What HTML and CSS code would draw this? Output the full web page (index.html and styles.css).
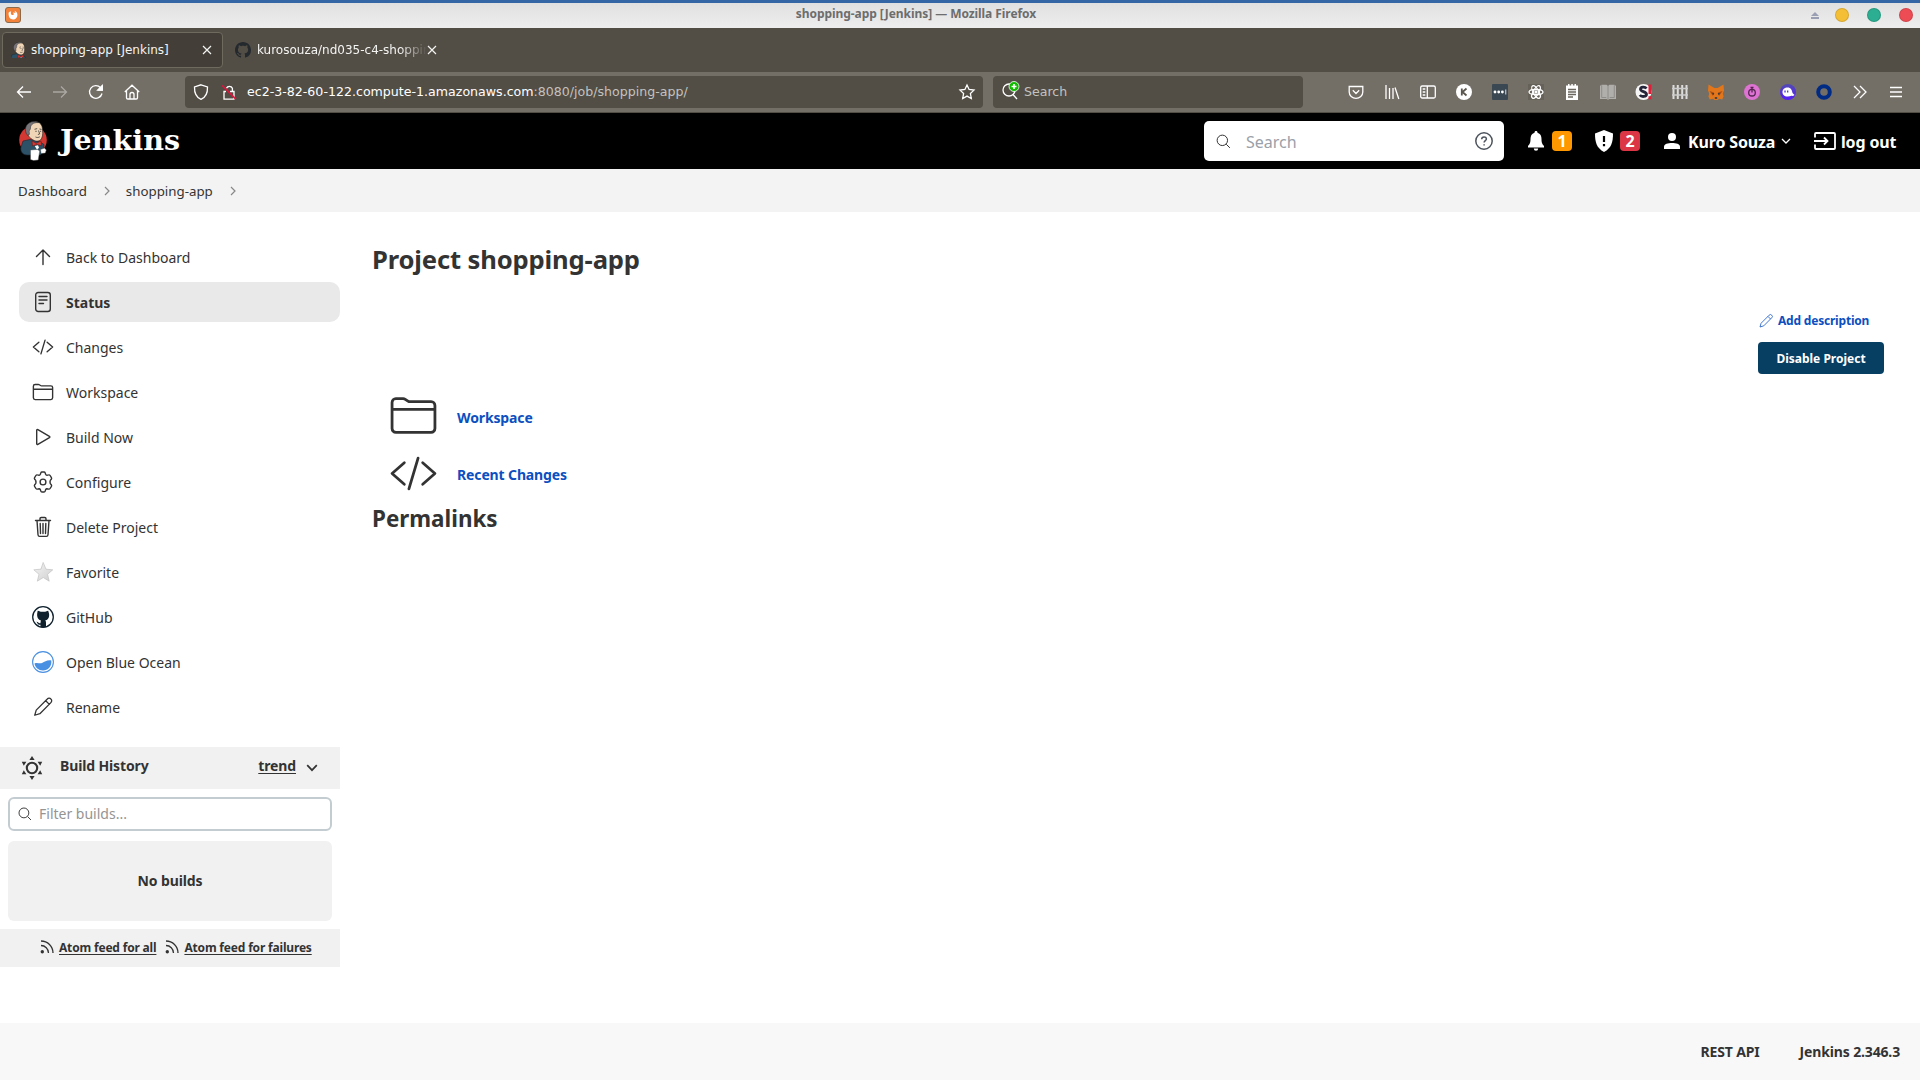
FILE: index.html
```html
<!DOCTYPE html>
<html lang="en">
<head>
<meta charset="utf-8">
<title>shopping-app [Jenkins]</title>
<link rel="stylesheet" href="styles.css">
</head>
<body>
<svg width="0" height="0" class="defs">
  <defs>
    <symbol id="folder" viewBox="0 0 512 512"><path d="M440 432H72a40 40 0 01-40-40V120a40 40 0 0140-40h75.89a40 40 0 0122.19 6.72l27.84 18.56a40 40 0 0022.19 6.72H440a40 40 0 0140 40v240a40 40 0 01-40 40zM32 192h448"/></symbol>
    <symbol id="code" viewBox="0 0 512 512"><path d="M160 368L32 256l128-112M352 368l128-112-128-112M304 96l-96 320"/></symbol>
    <symbol id="pencil" viewBox="0 0 24 24"><path d="M3 21l1.6-5.6L16.700 3.300a2.600 2.600 0 0 1 3.900 0a2.600 2.600 0 0 1 0 3.900L8.600 19.300zM15 5.200l3.900 3.900"/></symbol>
    <symbol id="search" viewBox="0 0 512 512"><path d="M221 64a157 157 0 10157 157A157 157 0 00221 64zM338 338l110 110"/></symbol>
    <symbol id="feed" viewBox="0 0 14 14"><circle cx="2.300" cy="11.700" r="1.700" fill="#333" stroke="none"/><path d="M1 5.500a7.500 7.500 0 0 1 7.500 7.500M1 1a12 12 0 0 1 12 12"/></symbol>
    <symbol id="octocat" viewBox="0 0 16 16"><path d="M8 0C3.580 0 0 3.580 0 8c0 3.540 2.290 6.530 5.470 7.590.4.070.55-.17.55-.38 0-.19-.01-.82-.01-1.490-2.010.37-2.530-.49-2.690-.94-.09-.23-.48-.94-.82-1.130-.28-.15-.68-.52-.01-.53.63-.01 1.080.58 1.230.82.72 1.210 1.870.87 2.330.66.07-.52.28-.87.51-1.070-1.780-.2-3.640-.89-3.640-3.950 0-.87.31-1.590.82-2.150-.08-.2-.36-1.020.08-2.120 0 0 .67-.21 2.200.82.64-.18 1.320-.27 2-.27s1.360.09 2 .27c1.530-1.040 2.200-.82 2.200-.82.44 1.100.16 1.920.08 2.120.51.56.82 1.270.82 2.150 0 3.070-1.870 3.750-3.650 3.950.29.25.54.73.54 1.480 0 1.070-.01 1.930-.01 2.200 0 .21.15.46.55.38A8.010 8.010 0 0 0 16 8c0-4.420-3.580-8-8-8z"/></symbol>
    <linearGradient id="silver" x1="0" y1="0" x2="1" y2="1"><stop offset="0" stop-color="#f4f4f4"/><stop offset="1" stop-color="#cfcfcf"/></linearGradient>
    <linearGradient id="ghost" x1="0" y1="0" x2="0" y2="1"><stop offset="0" stop-color="#534bb1"/><stop offset="1" stop-color="#551bf9"/></linearGradient>
    <symbol id="butler" viewBox="0 0 28 40">
      <path d="M4 20l7-1.500 10 2.500 4 2.500-.5 6-3 4.500H8C4 34 1.500 31 1.800 27z" fill="#2d5166" stroke="#172530" stroke-width=".6"/>
      <path d="M8.500 9C9 3.500 12.500.8 16.500.8c4.500 0 7 3.200 7 8.200.6 4.500 0 8-2.300 10.300-3 1.700-6 .5-8.700-1.500C9 15.500 8 13 8.500 9z" fill="#f0d6b7" stroke="#222" stroke-width=".6"/>
      <path d="M7.500 13C4.500 7 8 .8 15 .6c2-.1 4 .3 5 1-4-.3-7 .8-8.200 3.400-.6 1.500 0 2.800-.8 3.800-.6.900-1 1.200-.7 2.600.2 1.200.2 2.200-.4 2.600-1 .4-1.800.1-2.400-1z" fill="#77757a" stroke="#222" stroke-width=".5"/>
      <path d="M15.500 8.300l2.700-.7M20.500 8l2 .4M16.300 10.300h1.400M21 10.300h1.200M19.500 9.500l1.200 3.400-1.800.6M16.500 16c1.600.7 2.800.6 4.300-.2" fill="none" stroke="#333" stroke-width=".8"/>
      <path d="M13 20l4.200 2.300L22 20l.5 4.800-4.700-1.300-4.300 1.500z" fill="#d33833" stroke="#5b1715" stroke-width=".5"/>
      <path d="M15.800 25l3.200-.8 1 2.600-2 2z" fill="#fff"/>
      <path d="M11.500 29l7-.6 2.200 1.600-1.500 9-4.700.6-3-1z" fill="#fff" stroke="#444" stroke-width=".4"/>
      <path d="M21.500 28.500l4-1.400 1.800 2-1 3-4.200.4z" fill="#fff" stroke="#444" stroke-width=".4"/>
    </symbol>
  </defs>
</svg>

<div class="titlebar">
  <span class="app-icon"><svg viewBox="0 0 16 16"><path d="M3 5.500C2.500 10.500 5 13 8 13s5.400-2.300 5-6c-.3-2-1.500-3.500-3.500-4 1 1 1.400 2 1.200 3-.9-.9-2-.9-2.700-.4.900.4 1.200 1.300.6 2-.8.900-2.600.5-3-.9C5.300 5.700 5.500 4.700 6 4 4.700 4 3.500 4.500 3 5.500z" fill="#fff"/></svg></span>
  <span class="window-title">shopping-app [Jenkins] — Mozilla Firefox</span>
  <span class="window-buttons">
    <svg class="eject" viewBox="0 0 8 7"><path d="M4 0l4 4H0zM0 5h8v2H0z" fill="#9b9fb3"/></svg>
    <i class="dot amber"></i><i class="dot green"></i><i class="dot red"></i>
  </span>
</div>

<div class="tabs">
  <div class="tab selected">
    <svg class="favicon" viewBox="4 0 22 25"><use href="#butler" width="28" height="40"/></svg>
    <span class="tab-label">shopping-app [Jenkins]</span>
    <svg class="close" viewBox="0 0 10 10"><path d="M1 1l8 8M9 1l-8 8"/></svg>
  </div>
  <div class="tab">
    <svg class="favicon octo"><use href="#octocat"/></svg>
    <span class="tab-label fade">kurosouza/nd035-c4-shoppin</span>
    <svg class="close" viewBox="0 0 10 10"><path d="M1 1l8 8M9 1l-8 8"/></svg>
  </div>
</div>

<div class="toolbar">
  <div class="nav-buttons">
    <svg viewBox="0 0 16 16"><path d="M15 8H1.500M7 2.500L1.500 8 7 13.500"/></svg>
    <svg class="disabled" viewBox="0 0 16 16"><path d="M1 8h13.500M9 2.500L14.500 8 9 13.500"/></svg>
    <svg viewBox="0 0 16 16"><path d="M14 9.500A6.300 6.300 0 1 1 12.600 3.800M14.300 1.500v4.600H9.700"/><path d="M14.300 1.500v4.600H9.700z" fill="#fff"/></svg>
    <svg viewBox="0 0 16 16"><path d="M.8 8L8 1.200 15.200 8M2.500 7v6.700c0 .8.500 1.300 1.300 1.300h8.400c.8 0 1.300-.5 1.300-1.300V7M6 15v-4.500a2 2 0 0 1 4 0V15"/></svg>
  </div>
  <div class="urlbar">
    <svg viewBox="0 0 16 16"><path d="M8 .8L14.500 3C14.700 9 12.500 13.500 8 15.300 3.500 13.500 1.300 9 1.500 3z"/></svg>
    <svg class="lock" viewBox="0 0 16 16"><path d="M5.500 4.300a3.200 3.200 0 0 1 5.900 0V7M9 7.500h4v7.700H3V7.500h2"/><path class="slash" d="M1.200 1.500l13.600 13.600"/></svg>
    <span class="url"><b>ec2-3-82-60-122.compute-1.amazonaws.com</b>:8080/job/shopping-app/</span>
    <svg class="star" viewBox="0 0 16 16"><path d="M8 1l2.100 4.500 4.900.6-3.600 3.400.9 5L8 12.100l-4.300 2.400.9-5L1 6.100l4.900-.6z"/></svg>
  </div>
  <div class="searchbar">
    <svg viewBox="0 0 18 20"><circle cx="7" cy="9" r="6"/><path d="M11 13.500l4 4.500"/><circle cx="12" cy="5.500" r="5" fill="#12bc00" stroke="#fff" stroke-width=".8"/><path d="M12 3v5M9.500 5.500h5" stroke-width="1.600"/></svg>
    <span>Search</span>
  </div>
  <div class="extensions">
    <svg viewBox="0 0 16 16"><path d="M1.200 2.500h13.600V8a6.800 6.400 0 0 1-13.600 0zM4.800 6.300L8 9.500l3.200-3.200"/></svg>
    <svg viewBox="0 0 16 16"><path d="M2 1v14M5.500 4v11M9 4v11M11 3.500L14.800 15"/></svg>
    <svg viewBox="0 0 16 16"><rect x=".7" y="2" width="14.600" height="12" rx="1.500"/><path d="M7.300 2v12M2.700 5h2.600M2.700 8h2.600M2.700 11h2.600"/></svg>
    <svg viewBox="0 0 16 16"><circle cx="8" cy="8" r="8" fill="#fff" stroke="none"/><path d="M5.800 4.500v7M10.500 4.500L6.500 8l4 3.500" stroke="#5b574f" stroke-width="1.800"/></svg>
    <svg viewBox="0 0 16 16"><rect width="16" height="16" rx="1" fill="#3a4854" stroke="none"/><g fill="#fff" stroke="none"><circle cx="3" cy="8" r="1.400"/><circle cx="6.700" cy="8" r="1.400"/><circle cx="10.400" cy="8" r="1.400"/></g><path d="M13.700 5.500v5" stroke="#bbb"/></svg>
    <svg viewBox="0 0 16 16"><rect width="16" height="16" fill="#66625a" stroke="none"/><ellipse cx="8" cy="8" rx="7" ry="2.700"/><ellipse cx="8" cy="8" rx="7" ry="2.700" transform="rotate(60 8 8)"/><ellipse cx="8" cy="8" rx="7" ry="2.700" transform="rotate(120 8 8)"/><circle cx="8" cy="8" r="1" fill="#fff"/></svg>
    <svg viewBox="0 0 16 16"><path d="M2 1.500h12V16H2zM4 0h1.500v2H4zM7.300 0h1.500v2H7.300zM10.500 0H12v2h-1.500z" fill="#fff" stroke="none"/><path d="M4 5.500h8M4 8h8M4 10.500h8M4 13h5" stroke="#6b665e"/></svg>
    <svg viewBox="0 0 16 16"><path d="M0 1.500h1.500V.8h5L8 2l1.500-1.200h5v.7H16V15H9.500L8 15.700 6.500 15H0z" fill="#b0afac" stroke="none"/><path d="M8 2v13M1.700 1.500v12h4.600M14.300 1.500v12H9.700" stroke="#8b8985" stroke-width=".9"/></svg>
    <svg viewBox="0 0 16 16"><circle cx="7.500" cy="8" r="8" fill="#f5f5f5" stroke="none"/><path d="M10.500 4.500C9 2.500 4.500 2.700 4.500 5.200c0 2.800 6 2 6 5 0 2.800-5 3-6.700.8" stroke="#25253a" stroke-width="2.800"/><path d="M14 .5v9.500M14 12.300V15.300" stroke="#e01e37" stroke-width="3"/></svg>
    <svg viewBox="0 0 16 16"><path d="M1.500 1v14M5.800 1v14M10.200 1v14M14.500 1v14" stroke="#ddd" stroke-width="2"/><path d="M0 4.500h16M0 11h16" stroke="#ccc"/></svg>
    <svg viewBox="0 0 16 16"><path d="M.5.500l6 3.500h3l6-3.500.5 6-1.200 3 .8 3-1.400 3-3.200-.7L9.500 16h-3L5 14.800l-3.200.7L.4 12.500l.8-3L0 6.500z" fill="#e2761b" stroke="none"/><path d="M1.500 7L6 8.500 5 12zM14.500 7L10 8.500l1 3.500z" fill="#a94e12" stroke="none"/><path d="M4.500 9.500l1.500.7M11.500 9.500l-1.500.7M6.800 14h2.400" stroke="#233447"/></svg>
    <svg viewBox="0 0 16 16"><circle cx="8" cy="8" r="8" fill="#df73d4" stroke="none"/><circle cx="8" cy="8.700" r="3.300" stroke="#54264f"/><path d="M8 3.500v5M6.500 3.500h3" stroke="#54264f"/></svg>
    <svg viewBox="0 0 16 16"><circle cx="8" cy="8" r="8" fill="url(#ghost)" stroke="none"/><path d="M2.500 9C2 5 5 3.500 7.500 3.500c3.500 0 4.500 2.700 5 5.500l2 2c-1 1-2 1-3 .8C8 13.500 3 12.500 2.500 9z" fill="#fff" stroke="none"/><path d="M5 6.500v2M7.700 6.500v2" stroke="#4e36c8"/></svg>
    <svg viewBox="0 0 16 16"><circle cx="8" cy="8" r="5.800" stroke="#002b85" stroke-width="4"/></svg>
    <svg viewBox="0 0 16 16"><path d="M2 2l6 6-6 6M8 2l6 6-6 6"/></svg>
    <svg viewBox="0 0 16 16"><path d="M2 3.500h12M2 8h12M2 12.500h12"/></svg>
  </div>
</div>

<header class="header">
  <svg class="logo" viewBox="0 0 28 40"><circle cx="14" cy="19" r="13.800" fill="#d33833"/><use href="#butler" width="28" height="40"/></svg>
  <span class="brand">Jenkins</span>
  <div class="header-search">
    <svg class="mag"><use href="#search"/></svg>
    <span>Search</span>
    <svg class="help" viewBox="0 0 18 18"><circle cx="9" cy="9" r="8.200"/><path d="M6.700 7.200c0-3 4.700-3 4.700-.2 0 1.600-2.300 1.700-2.300 3.600M9.100 12.200v1.400"/></svg>
  </div>
  <svg class="bell" viewBox="0 0 16 20"><path d="M8 0c1 0 1.500.7 1.500 1.700C12.500 2.500 13.500 5 13.500 8c0 4 .8 5.300 2.500 7v1.500H0V15c1.700-1.700 2.500-3 2.500-7 0-3 1-5.500 4-6.300C6.500.7 7 0 8 0zM5.800 17.500h4.400a2.200 2.200 0 0 1-4.400 0z" fill="#fff"/></svg>
  <span class="badge orange">1</span>
  <svg class="shield" viewBox="0 0 18 22"><path d="M9 0l9 3.500C18 12 16.500 18 9 22 1.500 18 0 12 0 3.500z" fill="#fff"/><path d="M9 6v6M9 14v2.200" stroke="#000" stroke-width="2.200"/></svg>
  <span class="badge crimson">2</span>
  <svg class="person" viewBox="0 0 16 16"><circle cx="8" cy="4" r="4" fill="#fff"/><path d="M0 16v-2.500C0 11 4 10 8 10s8 1 8 3.500V16z" fill="#fff"/></svg>
  <span class="label user">Kuro Souza</span>
  <svg class="down" viewBox="0 0 10 6"><path d="M1 1l4 4 4-4"/></svg>
  <svg class="logout" viewBox="0 0 22 18"><path d="M1 5.500V2a1 1 0 0 1 1-1h18a1 1 0 0 1 1 1v14a1 1 0 0 1-1 1H2a1 1 0 0 1-1-1v-3.500M0 9h13M10 5.500L13.500 9 10 12.500"/></svg>
  <span class="label leave">log out</span>
</header>

<nav class="crumbs">
  <span>Dashboard</span><svg viewBox="0 0 6 10"><path d="M1 1l4 4-4 4"/></svg>
  <span>shopping-app</span><svg viewBox="0 0 6 10"><path d="M1 1l4 4-4 4"/></svg>
</nav>

<div class="page">
  <aside class="side">
    <div class="tasks">
      <div class="task"><svg viewBox="0 0 22 22"><path d="M11 18.500V4.500M4.500 10.500L11 4l6.500 6.500"/></svg><span>Back to Dashboard</span></div>
      <div class="task active"><svg viewBox="0 0 22 22"><rect x="3.700" y="1.500" width="14.600" height="19" rx="2.500"/><path d="M7 5.500h8M7 9h8M7 12.500h4.500"/></svg><span>Status</span></div>
      <div class="task"><svg class="thin"><use href="#code"/></svg><span>Changes</span></div>
      <div class="task"><svg class="thin"><use href="#folder"/></svg><span>Workspace</span></div>
      <div class="task"><svg viewBox="0 0 22 22"><path d="M4.700 4.300v13.400c0 .7.600 1 1.200.7l11.500-6.700c.6-.4.600-1 0-1.400L5.900 3.600c-.6-.3-1.200 0-1.200.7z"/></svg><span>Build Now</span></div>
      <div class="task"><svg viewBox="0 0 22 22"><circle cx="11" cy="11" r="2.900"/><path d="M8.800 1.900q.3-.9 1.200-.9h2q.9 0 1.200.9l.4 1.400q.4.900 1.300.9l1.700-.3q1-.2 1.500.6l1.300 2.100q.5.900-.1 1.600l-1 1.200q-.7.800 0 1.700v-.2q-.7.900 0 1.700l1 1.200q.6.700.1 1.600l-1.300 2.100q-.5.800-1.500.6l-1.700-.3q-.9 0-1.300.9l-.4 1.400q-.3.900-1.200.9h-2q-.9 0-1.200-.9l-.4-1.400q-.4-.9-1.300-.9l-1.700.3q-1 .2-1.500-.6l-1.300-2.100q-.5-.9.1-1.600l1-1.200q.7-.8 0-1.700v.2q.7-.9 0-1.700l-1-1.200q-.6-.7-.1-1.600l1.300-2.100q.5-.8 1.500-.6l1.700.3q.9 0 1.300-.9z"/></svg><span>Configure</span></div>
      <div class="task"><svg viewBox="0 0 22 22"><path d="M3.500 4.500h15M5 4.500l1 14.300c.1 1 .7 1.600 1.600 1.600h6.800c.9 0 1.500-.6 1.600-1.600l1-14.300M8 4.500V2.700c0-.8.500-1.200 1.200-1.200h3.600c.7 0 1.200.4 1.200 1.200v1.800M8.200 7.500l.3 10M11 7.500v10M13.800 7.500l-.3 10"/></svg><span>Delete Project</span></div>
      <div class="task"><svg viewBox="0 0 22 22"><path d="M11.300 1.800l2.700 6.400 6.800.6-5.200 4.500 1.600 6.900-5.900-3.700-6 3.700L7 13.300 1.800 8.800l6.800-.6z" fill="url(#silver)" stroke="#bbb" stroke-width=".6"/></svg><span>Favorite</span></div>
      <div class="task"><svg viewBox="0 0 22 22"><circle cx="11" cy="11" r="10.300" fill="#fff" stroke="#10212e" stroke-width="1.300"/><path d="M5.500 6c0-1 .2-1.300.5-1.300.9 0 2 .8 2.700 1h4.600c.7-.2 1.800-1 2.700-1 .3 0 .5.300.5 1.300.5 1 .8 2 .6 4-.3 2.800-1.700 4-3.800 4.300.6.7.7 1.500.7 2.500V21c-2 .6-4 .6-5.500.1v-2.400c-3 .5-3-2.200-4.200-3 2-.3 2 2 4.200 1.500 0-1 .1-2 .5-2.800-2-.4-3.500-1.600-3.800-4.400-.1-2 0-3 .3-4z" fill="#10212e" stroke="none"/></svg><span>GitHub</span></div>
      <div class="task"><svg viewBox="0 0 22 22"><circle cx="11" cy="11" r="10.400" fill="#fff" stroke="#4a90e2" stroke-width="1.100"/><path d="M2.500 12.500c3-1.500 5 .6 7.500-.5 3-1.200 5-3.200 9.300-2.500.8 6-3.500 10-8.300 10-4.500 0-7.800-3-8.500-7z" fill="#4a90e2" stroke="none"/></svg><span>Open Blue Ocean</span></div>
      <div class="task"><svg><use href="#pencil"/></svg><span>Rename</span></div>
    </div>

    <div class="history-head">
      <svg class="sun" viewBox="0 0 22 24"><circle cx="11" cy="12" r="5.200" fill="none" stroke="#333" stroke-width="2.100"/><path d="M11 0l2.600 4H8.400zM11 24l2.600-4H8.400zM.8 5.800h4.600L2.800 9.800zM.8 18.200h4.600L2.800 14.200zM21.200 5.800h-4.600l2.600 4zM21.200 18.200h-4.600l2.600-4z" fill="#333"/></svg>
      <span class="history-title">Build History</span>
      <u>trend</u>
      <svg class="down-dark" viewBox="0 0 12 8"><path d="M1.200 1.200L6 6.200l4.800-5"/></svg>
    </div>
    <div class="filter"><svg><use href="#search"/></svg><span>Filter builds...</span></div>
    <div class="no-builds">No builds</div>
    <div class="feeds">
      <svg><use href="#feed"/></svg><u>Atom feed for all</u>
      <svg><use href="#feed"/></svg><u>Atom feed for failures</u>
    </div>
  </aside>

  <main class="main">
    <h1>Project shopping-app</h1>
    <div class="actions">
      <div class="add"><svg><use href="#pencil"/></svg><span>Add description</span></div>
      <div class="disable">Disable Project</div>
    </div>
    <div class="link-row"><svg><use href="#folder"/></svg><span>Workspace</span></div>
    <div class="link-row second"><svg><use href="#code"/></svg><span>Recent Changes</span></div>
    <h2>Permalinks</h2>
  </main>
</div>

<footer class="footer"><span>REST API</span><span>Jenkins 2.346.3</span></footer>
</body>
</html>
```
FILE: styles.css
```css
* { box-sizing: border-box; }
body {
  margin: 0;
  width: 1920px;
  height: 1080px;
  overflow: hidden;
  display: flex;
  flex-direction: column;
  background: #fff;
  color: #333;
  font: 14px/20px "Noto Sans", sans-serif;
}
svg { display: block; flex: none; fill: none; overflow: visible; }
span, u { white-space: nowrap; }
.defs { position: absolute; }

.titlebar {
  flex: none;
  height: 28px;
  border-top: 3px solid #3465a4;
  background: linear-gradient(#e0e0e0, #eee);
  display: grid;
  grid-template-columns: 160px 1fr 160px;
  align-items: center;
  padding: 0 7px 0 5px;
}
.app-icon {
  width: 16px;
  height: 16px;
  margin-bottom: 2px;
  border: 1px solid #8a6a4c;
  border-radius: 3px;
  background: #f2813a;
}
.window-title {
  padding: 0 86px 4px 0;
  text-align: center;
  font: bold 12px/16px "Noto Sans", sans-serif;
  letter-spacing: -.06px;
  color: #6d6d6d;
}
.window-buttons { display: flex; align-items: center; justify-content: flex-end; gap: 18px; }
.eject { width: 8px; height: 7px; margin-right: -2px; }
.dot { width: 14px; height: 14px; margin-bottom: 2px; border-radius: 50%; border: 1px solid rgba(0, 0, 0, .12); }
.amber { background: #f5bf35; }
.green { background: #2bae91; }
.red { background: #ee4c54; }

.tabs {
  flex: none;
  height: 44px;
  padding: 4px 2px;
  display: flex;
  background: #524d45;
  color: #f4f4f2;
  font: 12px/20px "DejaVu Sans", sans-serif;
}
.tab {
  width: 221px;
  height: 36px;
  padding: 0 10px 0 8px;
  display: flex;
  align-items: center;
}
.tab + .tab { margin-left: 3px; }
.selected { background: #433f38; border: 1px solid #6f6a5e; border-radius: 4px; }
.favicon { width: 16px; height: 16px; overflow: hidden; margin-right: 4px; }
.octo { fill: #24292e; margin: 0 6px 0 1px; }
.tab-label { flex: 1; overflow: hidden; }
.fade { flex: 0 0 170px; -webkit-mask-image: linear-gradient(90deg, #000 84%, transparent); mask-image: linear-gradient(90deg, #000 84%, transparent); }
.close { width: 10px; height: 10px; stroke: #f4f4f2; stroke-width: 1.2; }

.toolbar {
  flex: none;
  height: 41px;
  padding: 4px 6px 4px 0;
  display: flex;
  background: #736e66;
  border-bottom: 1px solid #524d45;
  stroke: #fff;
  stroke-width: 1.3;
  font: 12.6px/20px "DejaVu Sans", sans-serif;
}
.nav-buttons { width: 185px; display: flex; align-items: center; gap: 20px; padding-left: 16px; }
.nav-buttons svg { width: 16px; height: 16px; }
.disabled { opacity: .4; }
.urlbar, .searchbar {
  height: 32px;
  border-radius: 4px;
  background: #524d45;
  color: #c4c2bf;
  display: flex;
  align-items: center;
}
.urlbar span, .searchbar span { stroke: none; }
.urlbar { width: 798px; padding: 0 8px; margin-right: 10px; }
.urlbar svg { width: 16px; height: 16px; margin-right: 12px; }
.urlbar .lock { margin-right: 10px; }
.urlbar .star { margin: 0 0 0 auto; }
.slash { stroke: #e4123d; stroke-width: 1.6; }
.url b { font-weight: normal; color: #fff; }
.searchbar { width: 310px; padding-left: 9px; }
.searchbar svg { width: 18px; height: 20px; margin: -2px 4px 0 0; }
.extensions { margin-left: auto; display: flex; align-items: center; }
.extensions svg { width: 16px; height: 16px; margin: 0 10px; }

.header {
  flex: none;
  height: 56px;
  padding: 0 24px 0 19px;
  display: flex;
  align-items: center;
  background: #000;
  color: #fff;
  font: bold 16px/24px "Noto Sans", sans-serif;
}
.logo { width: 28px; height: 40px; }
.brand { margin: -3px auto 0 13px; font: bold 28.600px/36px "DejaVu Serif", serif; }
.header-search {
  width: 300px;
  height: 40px;
  border-radius: 5px;
  background: #fff;
  color: #9aa0a8;
  font-weight: normal;
  display: flex;
  align-items: center;
  padding: 0 11px;
}
.mag { width: 17px; height: 17px; stroke: #333; stroke-width: 30px; margin-right: 14px; }
.header-search span { padding-top: 2px; }
.help { width: 18px; height: 18px; margin-left: auto; stroke: #4d545d; stroke-width: 1.5; }
.header .label { padding-top: 2px; letter-spacing: -.15px; }
.user { width: 86px; }
.leave { width: 55px; }
.bell { width: 16px; height: 20px; margin: 0 8px 0 24px; }
.badge { width: 20px; height: 20px; border-radius: 4px; text-align: center; line-height: 21px; }
.orange { background: #ff9800; }
.crimson { background: #dc3545; }
.shield { width: 18px; height: 22px; margin: 0 7px 0 23px; }
.person { width: 16px; height: 16px; margin: 0 8px 0 24px; }
.down { width: 10px; height: 6px; margin: 0 23px 0 7px; stroke: #fff; stroke-width: 1.3; }
.logout { width: 22px; height: 18px; margin-right: 5px; stroke: #fff; stroke-width: 1.8; }

.crumbs {
  flex: none;
  height: 43px;
  padding-left: 18px;
  display: flex;
  align-items: center;
  background: #f3f3f3;
  font-size: 13.300px;
}
.crumbs svg { width: 6px; height: 10px; margin: 0 16px 0 17px; stroke: #888; stroke-width: 1.2; }

.page { flex: none; height: 811px; display: flex; }
.side { width: 340px; flex: none; }
.tasks { padding: 25px 0 15px 19px; }
.task {
  height: 40px;
  margin-bottom: 5px;
  padding-left: 13px;
  display: flex;
  align-items: center;
  gap: 12px;
  border-radius: 10px;
}
.task span { padding-top: 2px; }
.task svg { width: 22px; height: 22px; stroke: #333; stroke-width: 1.4; stroke-linecap: round; stroke-linejoin: round; }
.task .thin { stroke-width: 32px; }
.active { background: #e9e9e9; font-weight: bold; }

.history-head {
  height: 42px;
  padding: 0 22px 0 21px;
  display: flex;
  align-items: center;
  background: #f1f1f1;
  font-weight: bold;
  letter-spacing: -.13px;
}
.sun { width: 22px; height: 24px; margin-right: 17px; }
.history-head .history-title, .history-head u { margin-top: -4px; }
.history-title { margin-right: auto; }
.down-dark { width: 12px; height: 8px; margin-left: 10px; stroke: #333; stroke-width: 1.7; }
.history-head u, .feeds u { text-underline-offset: 2px; }
.filter {
  width: 324px;
  height: 34px;
  margin: 8px 8px 10px;
  padding-left: 7px;
  border: 2px solid #c3ccd1;
  border-radius: 6px;
  display: flex;
  align-items: center;
  gap: 6px;
  color: #949494;
}
.filter svg { width: 16px; height: 16px; stroke: #333; stroke-width: 30px; }
.no-builds {
  width: 324px;
  height: 80px;
  margin: 0 8px 8px;
  border-radius: 6px;
  background: #f1f1f1;
  font-weight: bold;
  letter-spacing: -.13px;
  text-align: center;
  line-height: 80px;
}
.feeds {
  height: 38px;
  padding-left: 40px;
  display: flex;
  align-items: center;
  background: #f1f1f1;
  font-size: 12px;
  font-weight: bold;
  letter-spacing: -.18px;
}
.feeds svg { width: 14px; height: 14px; margin: -3px 5px 0 0; stroke: #333; stroke-width: 1.3; }
.feeds u { margin-right: 9px; }

.main { flex: 1; padding: 28px 36px 0 32px; }
h1, h2 { margin: 0; font-weight: bold; }
h1 { font-size: 25.600px; line-height: 40px; letter-spacing: -.15px; }
.actions {
  height: 110px;
  padding-top: 31px;
  display: flex;
  flex-direction: column;
  align-items: flex-end;
  font-size: 12px;
  font-weight: bold;
}
.add { width: 126px; height: 20px; display: flex; align-items: center; gap: 4px; color: #0b4fc0; letter-spacing: -.2px; }
.add svg { width: 16px; height: 16px; stroke: #2562c8; stroke-width: 1.3; }
.disable {
  width: 126px;
  height: 32px;
  margin-top: 11px;
  border-radius: 4px;
  background: #073f63;
  color: #fff;
  text-align: center;
  line-height: 33px;
}
.link-row {
  height: 56px;
  padding-left: 17px;
  display: flex;
  align-items: center;
  gap: 19px;
  color: #0b4fc0;
  font-weight: bold;
  letter-spacing: -.13px;
}
.link-row svg { width: 49px; height: 49px; margin-top: -5px; stroke: #333; stroke-width: 29px; stroke-linecap: round; stroke-linejoin: round; }
.second { height: 57px; }
.second svg { margin-top: -3px; }
h2 { font-size: 22.400px; line-height: 32px; }

.footer {
  flex: none;
  height: 57px;
  margin-top: auto;
  padding: 0 20px;
  display: flex;
  align-items: center;
  justify-content: flex-end;
  gap: 40px;
  background: #f8f8f8;
  font-weight: bold;
  letter-spacing: -.15px;
}
```
